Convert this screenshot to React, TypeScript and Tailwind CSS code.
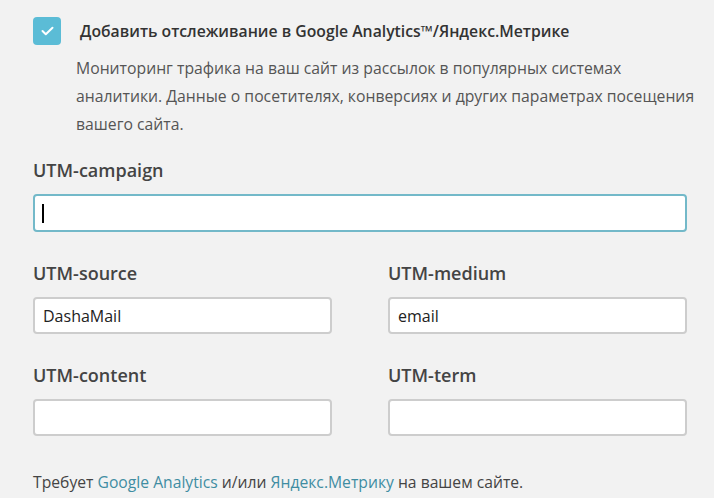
import React from "react";

function Field({ label, value, focused }: { label: string; value?: string; focused?: boolean }) {
  return (
    <div className="flex flex-col">
      <div className="h-[24px] leading-[24px] text-[18px] font-semibold text-[#444]">{label}</div>
      {focused ? (
        <div className="mt-[12px] h-[38px] rounded-[4px] border-2 border-[#73b9c9] bg-white flex items-center pl-[7px]">
          <span className="block w-[2px] h-[19px] bg-black" />
        </div>
      ) : (
        <input
          readOnly
          defaultValue={value}
          className="mt-[12px] h-[37px] rounded-[4px] border-2 border-[#cdcdcd] bg-white pl-[8px] text-[16px] text-[#222] outline-none"
          style={{ fontFamily: "'Open Sans', sans-serif" }}
        />
      )}
    </div>
  );
}

export default function App() {
  return (
    <div
      className="min-h-[498px] w-[714px] bg-[#f2f2f2] pt-[17px] pl-[33px]"
      style={{ fontFamily: "'Open Sans', 'Noto Sans', sans-serif" }}
    >
      <div className="w-[654px]">
        <div className="flex items-center">
          <div className="w-[28px] h-[28px] rounded-[4px] bg-[#5bbcd6] flex items-center justify-center">
            <svg width="13" height="10" viewBox="0 0 13 10" fill="none">
              <path d="M1.5 5 L4.8 8.2 L11.5 1.8" stroke="white" strokeWidth="2" strokeLinecap="round" strokeLinejoin="round" />
            </svg>
          </div>
          <div className="ml-[19px] leading-[28px] text-[15.75px] font-semibold text-[#333]">
            Добавить отслеживание в Google Analytics™/Яндекс.Метрике
          </div>
        </div>
        <div className="mt-[9px] ml-[43px] w-[630px] text-[15.75px] leading-[28px] text-[#555]">
          Мониторинг трафика на ваш сайт из рассылок в популярных системах аналитики. Данные о посетителях, конверсиях и других параметрах посещения вашего сайта.
        </div>

        <div className="mt-[20px]">
          <Field label="UTM-campaign" focused />
        </div>

        <div className="mt-[29px] grid grid-cols-2 gap-x-[56px]">
          <Field label="UTM-source" value="DashaMail" />
          <Field label="UTM-medium" value="email" />
        </div>

        <div className="mt-[29px] grid grid-cols-2 gap-x-[56px]">
          <Field label="UTM-content" />
          <Field label="UTM-term" />
        </div>

        <div className="mt-[34px] h-[24px] leading-[24px] text-[15.7px] text-[#444]">
          Требует <span className="text-[#3f8da2]">Google Analytics</span> и/или{" "}
          <span className="text-[#3f8da2]">Яндекс.Метрику</span> на вашем сайте.
        </div>
      </div>
    </div>
  );
}
